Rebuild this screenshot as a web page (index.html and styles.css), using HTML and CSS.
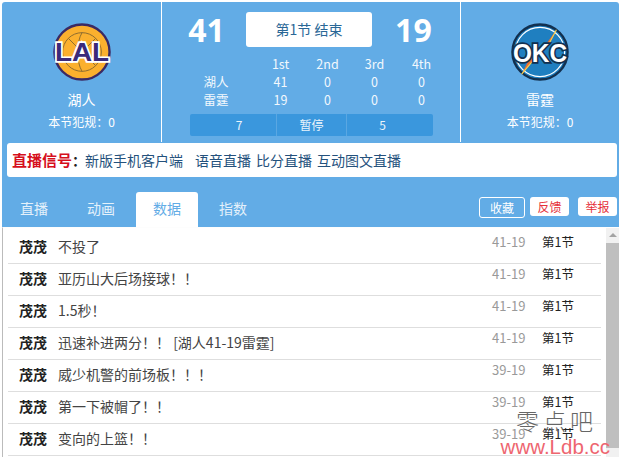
FILE: index.html
```html
<!DOCTYPE html>
<html lang="zh-CN">
<head>
    <meta charset="UTF-8">
    <meta name="viewport" content="width=device-width, initial-scale=1.0">
    <title>湖人 vs 雷霆 直播</title>
    <link rel="stylesheet" href="styles.css">
</head>
<body>
    <div class="page">
        <div class="board">
            <div class="team">
                <svg class="logo" viewBox="0 0 60 60" width="58" height="58">
                    <circle cx="30" cy="30" r="28.5" fill="#fbb02e" stroke="#3b2a63" stroke-width="2.5"/>
                    <circle cx="30" cy="30" r="20" fill="none" stroke="#8a6a30" stroke-width="1"/>
                    <path d="M30 10C24 20 24 40 30 50M16 16C24 24 36 36 44 44M44 16C38 22 34 26 30 30" fill="none" stroke="#8a6a30" stroke-width="1"/>
                    <text x="30" y="39" class="logo-text lal" text-anchor="middle" textLength="56" lengthAdjust="spacingAndGlyphs">LAL</text>
                </svg>
                <div class="team-name">湖人</div>
                <div class="fouls">本节犯规：0</div>
            </div>

            <div class="middle">
                <div class="score-row">
                    <span class="big-score">41</span>
                    <span class="status">第1节 结束</span>
                    <span class="big-score">19</span>
                </div>
                <div class="quarters">
                    <span></span><span>1st</span><span>2nd</span><span>3rd</span><span>4th</span>
                    <span>湖人</span><span>41</span><span>0</span><span>0</span><span>0</span>
                    <span>雷霆</span><span>19</span><span>0</span><span>0</span><span>0</span>
                </div>
                <div class="timeouts">
                    <span>7</span>
                    <span>暂停</span>
                    <span>5</span>
                </div>
            </div>

            <div class="team team-right">
                <svg class="logo" viewBox="0 0 60 60" width="58" height="58">
                    <circle cx="30" cy="30" r="28.5" fill="#1f7fc0" stroke="#12304f" stroke-width="2.5"/>
                    <circle cx="30" cy="30" r="25.5" fill="none" stroke="#fff" stroke-width="1.2"/>
                    <path d="M47 7L34 25L20 35L11 53L26 35L38 24Z" fill="#ef6c2f"/>
                    <path d="M47 7L38 24L26 35L11 53" fill="none" stroke="#f5d04e" stroke-width="1.2"/>
                    <text x="30" y="40" class="logo-text okc" text-anchor="middle" textLength="56" lengthAdjust="spacingAndGlyphs">OKC</text>
                </svg>
                <div class="team-name">雷霆</div>
                <div class="fouls">本节犯规：0</div>
            </div>
        </div>

        <div class="signal">
            <b class="signal-title">直播信号</b><b class="signal-colon">：</b>
            <a class="signal-link wide">新版手机客户端</a>
            <a class="signal-link">语音直播</a>
            <a class="signal-link">比分直播</a>
            <a class="signal-link">互动图文直播</a>
        </div>

        <div class="tabbar">
            <div class="tabs">
                <span class="tab">直播</span>
                <span class="tab">动画</span>
                <span class="tab active">数据</span>
                <span class="tab">指数</span>
            </div>
            <div class="actions">
                <span class="btn-outline">收藏</span>
                <span class="btn-red">反馈</span>
                <span class="btn-red">举报</span>
            </div>
        </div>

        <div class="feed">
            <div class="rows">
                <div class="row"><b>茂茂</b><span class="msg">不投了</span><span class="pts">41-19</span><span class="period">第1节</span></div>
                <div class="row"><b>茂茂</b><span class="msg">亚历山大后场接球！！</span><span class="pts">41-19</span><span class="period">第1节</span></div>
                <div class="row"><b>茂茂</b><span class="msg">1.5秒！</span><span class="pts">41-19</span><span class="period">第1节</span></div>
                <div class="row"><b>茂茂</b><span class="msg">迅速补进两分！！ [湖人41-19雷霆]</span><span class="pts">41-19</span><span class="period">第1节</span></div>
                <div class="row"><b>茂茂</b><span class="msg">威少机警的前场板！！！</span><span class="pts">39-19</span><span class="period">第1节</span></div>
                <div class="row"><b>茂茂</b><span class="msg">第一下被帽了！！</span><span class="pts">39-19</span><span class="period">第1节</span></div>
                <div class="row"><b>茂茂</b><span class="msg">变向的上篮！！</span><span class="pts">39-19</span><span class="period">第1节</span></div>
            </div>
            <div class="scrollbar">
                <div class="scroll-arrow"></div>
                <div class="scroll-thumb"></div>
            </div>
        </div>

        <div class="watermark">
            <div class="wm-cn">零点吧</div>
            <div class="wm-url">www.Ldb.cc</div>
        </div>
    </div>
</body>
</html>
```

FILE: styles.css
```css
* {
    box-sizing: border-box;
}
html, body {
    margin: 0;
    padding: 0;
    background: #fff;
    overflow: hidden;
}
body {
    width: 619px;
    height: 457px;
    font-family: "Noto Sans CJK SC", "Open Sans", sans-serif;
    font-size: 13px;
    color: #333;
}
.page {
    position: relative;
    margin: 2px 0 0 2px;
    height: 455px;
    background: #62ace6;
    border-radius: 3px 3px 0 0;
    overflow: hidden;
}
.board {
    display: flex;
    height: 140px;
}
.team {
    width: 160px;
    display: flex;
    flex-direction: column;
    align-items: center;
    padding-top: 21px;
    color: #fff;
}
.team-right {
    width: 159px;
}
.logo {
    display: block;
}
.logo-text {
    font-family: "Liberation Sans", sans-serif;
    font-weight: bold;
    font-size: 26px;
    paint-order: stroke;
}
.lal {
    fill: #3b2a7a;
    stroke: #fff;
    stroke-width: 3.5px;
}
.okc {
    fill: #fff;
    stroke: #12304f;
    stroke-width: 3.5px;
}
.team-name {
    margin-top: 7px;
    font-size: 14px;
    line-height: 22px;
}
.fouls {
    margin-top: 3px;
    font-size: 12px;
    line-height: 18px;
}
.middle {
    width: 300px;
    border-left: 1px solid #fff;
    border-right: 1px solid #fff;
    padding: 10px 27px 0 27px;
    color: #fff;
}
.score-row {
    display: flex;
    align-items: center;
    height: 35px;
    margin-left: -2px;
}
.big-score {
    width: 40px;
    font-family: "Open Sans", sans-serif;
    font-size: 32px;
    font-weight: 700;
    line-height: 33px;
    text-align: center;
}
.status {
    width: 128px;
    height: 35px;
    margin: 0 22px 0 20px;
    line-height: 35px;
    background: #fff;
    border-radius: 3px;
    text-align: center;
    font-size: 14px;
    color: #2a6796;
}
.quarters {
    display: grid;
    grid-template-columns: 66px repeat(4, 47px);
    margin-top: 8px;
    padding-left: 2px;
    font-size: 12.5px;
    line-height: 18px;
    text-align: center;
    color: #f2f8fd;
}
.quarters span:nth-child(5n + 1) {
    padding-right: 16px;
}
.timeouts {
    display: grid;
    grid-template-columns: 86px 70px 86px;
    height: 22px;
    margin: 5px 0 0 1px;
    background: #3a97dd;
    border-radius: 2px;
    font-size: 12px;
    line-height: 22px;
    text-align: center;
    color: #eaf4fb;
}
.timeouts span + span {
    border-left: 1px solid #5aa7e2;
}
.timeouts span:first-child {
    padding-left: 12px;
}
.timeouts span:last-child {
    padding-right: 14px;
}
.signal {
    display: flex;
    align-items: center;
    height: 34px;
    margin: 1px 2px 0 5px;
    padding: 0 0 1px 5px;
    background: #fff;
    border-radius: 3px;
    font-size: 14px;
    white-space: nowrap;
}
.signal-title {
    font-size: 15px;
    color: #d60f1c;
}
.signal-colon {
    width: 13px;
    color: #222;
}
.signal-link {
    margin-right: 5px;
    color: #24517c;
}
.signal-link.wide {
    margin-right: 12px;
}
.tabbar {
    display: flex;
    justify-content: space-between;
    align-items: flex-end;
    height: 50px;
    padding-top: 16px;
}
.tabs {
    display: flex;
    margin-left: 3px;
}
.tab {
    width: 62px;
    height: 35px;
    margin-left: 4px;
    line-height: 33px;
    text-align: center;
    font-size: 14px;
    color: #e4f1fb;
}
.tab:first-child {
    margin-left: 0;
    width: 61px;
    padding-right: 3px;
}
.tab.active {
    background: #fff;
    color: #62ace6;
    border-radius: 3px 3px 0 0;
}
.actions {
    display: flex;
    align-self: flex-start;
    margin-top: 4px;
    padding-right: 2px;
    font-size: 12px;
}
.btn-outline {
    width: 46px;
    height: 21px;
    margin-right: 5px;
    line-height: 19px;
    border: 1px solid #fff;
    border-radius: 3px;
    text-align: center;
    color: #fff;
}
.btn-red {
    width: 39px;
    height: 19px;
    margin-left: 9px;
    line-height: 19px;
    background: #fff;
    border-radius: 3px;
    text-align: center;
    color: #e5303a;
}
.btn-outline + .btn-red {
    margin-left: 0;
}
.feed {
    display: flex;
    height: 230px;
    background: #fff;
    border-top: 1px solid #fdfdfd;
    border-left: 1px solid #bbb;
}
.rows {
    width: 603px;
    padding: 4px 5px 0 5px;
}
.row {
    display: flex;
    align-items: center;
    height: 32px;
    padding: 0 0 3px 11px;
    border-bottom: 1px solid #dedede;
    font-size: 14px;
    white-space: nowrap;
}
.row b {
    width: 39px;
    color: #222;
}
.msg {
    flex: 1;
    color: #444;
}
.pts,
.period {
    align-self: flex-start;
    line-height: 20px;
}
.pts {
    width: 50px;
    font-size: 13px;
    color: #999;
}
.period {
    width: 35px;
    margin-right: 24px;
    font-size: 12.5px;
    color: #222;
}
.scrollbar {
    width: 13px;
    height: 100%;
    background: #f1f1f1;
}
.scroll-arrow {
    height: 15px;
    padding-top: 5px;
}
.scroll-arrow::before {
    content: "";
    display: block;
    width: 0;
    margin: 0 auto;
    border-left: 4px solid transparent;
    border-right: 4px solid transparent;
    border-bottom: 4px solid #a3a3a3;
}
.scroll-thumb {
    height: 205px;
    background: #bfbfbf;
}
.watermark {
    position: absolute;
    right: 9px;
    bottom: 0;
    text-align: right;
    line-height: 1;
}
.wm-cn {
    margin-right: 13px;
    font-family: "Noto Sans CJK SC", sans-serif;
    font-size: 23px;
    font-weight: 200;
    letter-spacing: 4px;
    color: #666;
}
.wm-url {
    margin-top: 5px;
    font-family: "Liberation Sans", sans-serif;
    font-size: 20.5px;
    color: #ee6670;
}
```
